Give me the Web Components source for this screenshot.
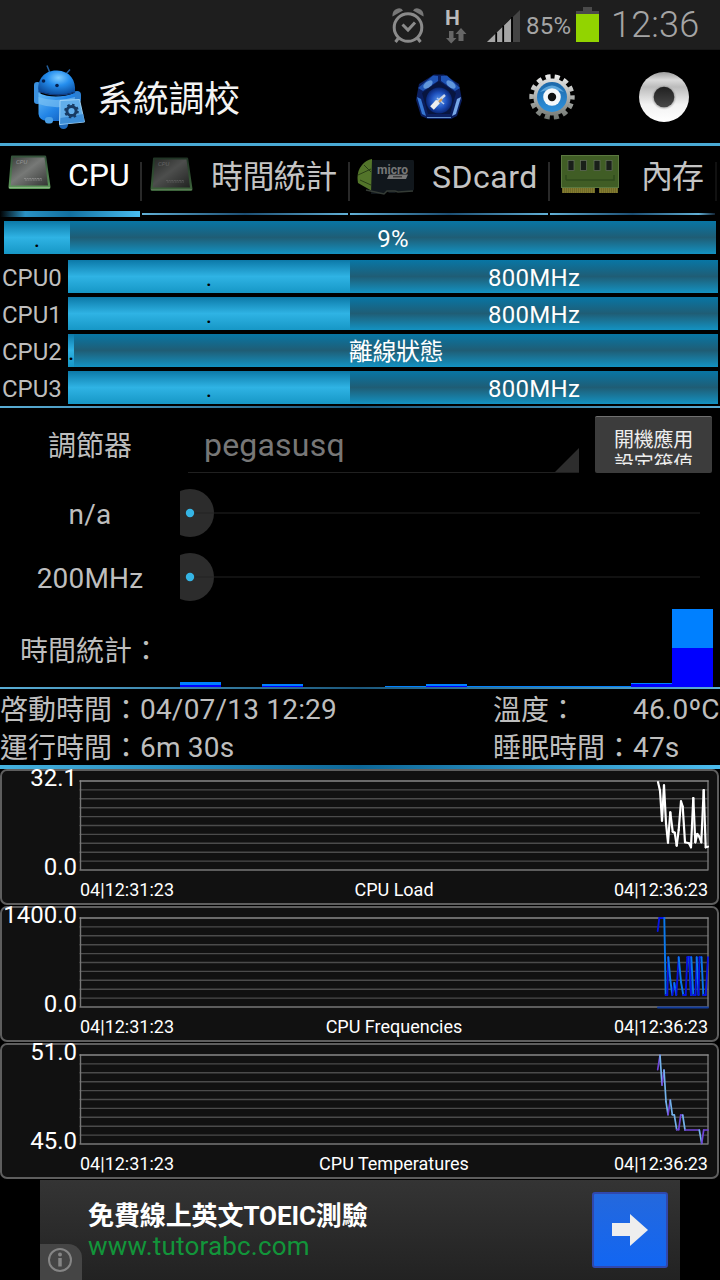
<!DOCTYPE html>
<html lang="zh-Hant">
<head>
<meta charset="utf-8">
<title>系統調校</title>
<style>
  body {
    margin: 0;
    width: 720px;
    height: 1280px;
    overflow: hidden;
    background: #000;
    color: #bebebe;
    font-family: Roboto, "Noto Sans CJK TC", sans-serif;
    font-size: 28px;
  }
</style>
</head>
<body>
<system-tuner></system-tuner>

<script>
// shared base: clones the given markup into an open shadow root
class BaseElement extends HTMLElement {
  render(html) {
    const template = document.createElement("template");
    template.innerHTML = html;
    if (!this.shadowRoot) this.attachShadow({ mode: "open" });
    this.shadowRoot.replaceChildren(template.content.cloneNode(true));
  }
}

const chip = `
  <defs>
    <linearGradient id="g" x1="0" y1="0" x2="1" y2="1">
      <stop offset="0" stop-color="#3c3f3c"/><stop offset=".45" stop-color="#777977"/><stop offset="1" stop-color="#343634"/>
    </linearGradient>
    <linearGradient id="e" x1="0" y1="0" x2="0" y2="1">
      <stop offset="0" stop-color="#33503a"/><stop offset="1" stop-color="#5f9b5c"/>
    </linearGradient>
  </defs>
  <path d="M3 1.5Q3 .5 4 .5H37Q38 .5 38.2 1.5L42.5 32Q42.5 34 41 34H2Q.5 34 .5 32Z" fill="url(#e)"/>
  <path d="M5 2.5H36.5L40 30.5H2.8Z" fill="url(#g)"/>
  <path d="M1 32.5H42" stroke="#8ab582" stroke-width="1"/>
  <text x="8" y="9" font-size="6" font-style="italic" fill="#999">CPU</text>
  <path d="M16 23.5H34M17 25H34" stroke="#999" stroke-width=".7" stroke-dasharray="2 .6"/>`;

const icons = {
  alarm: [32, 35, `
    <g fill="none" stroke="#8b8b8b">
      <circle cx="16" cy="19.5" r="13.8" stroke-width="3"/>
      <path d="M10.5 16.5L16 22L23 14.5" stroke-width="3"/>
      <path d="M6.5 30L3.5 34M25.5 30L28.5 34" stroke-width="3"/>
    </g>
    <path d="M.5 8.5Q0 2.5 5 .7Q9 -.5 11 2.5Z" fill="#777"/>
    <path d="M31.5 8.5Q32 2.5 27 .7Q23 -.5 21 2.5Z" fill="#777"/>`],
  transfer: [21, 16, `
    <path d="M3 3H7.5V10H10.5L5.2 15.5L0 10H3Z" fill="#666"/>
    <path d="M12.5 13H17.5V6H20.5L15 0L9.5 6H12.5Z" fill="#666"/>`],
  signal: [33, 33, `
    <path d="M0 33L33 1V33Z" fill="#444"/>
    <path d="M0 33L24.5 9.2V33Z" fill="#a5a5a5"/>
    <path d="M9.2 23.5V33M16.2 16.5V33M25 8V33" stroke="#000" stroke-width="1.8"/>`],
  battery: [23, 36, `
    <path d="M7 0H16V4H23V8H0V4H7Z" fill="#4a4a4a"/>
    <rect y="7" width="23" height="28" fill="#92d400"/>`],
  app: [54, 66, `
    <defs>
      <linearGradient id="a" x1="0" y1="0" x2="1" y2="1">
        <stop offset="0" stop-color="#65bdfa"/><stop offset=".5" stop-color="#2284e6"/><stop offset="1" stop-color="#0d50ae"/>
      </linearGradient>
      <radialGradient id="h" cx=".55" cy=".3" r=".7">
        <stop offset="0" stop-color="#7fcdff"/><stop offset=".45" stop-color="#258eee"/><stop offset="1" stop-color="#0c4e9f"/>
      </radialGradient>
    </defs>
    <path d="M17 9L14 1.5M33 10L37 5.5" stroke="#235f9c" stroke-width="1.5"/>
    <rect x="1" y="18" width="6.5" height="22" rx="3.2" fill="#3b91df"/>
    <rect x="40" y="27" width="8" height="12" rx="4" fill="#2c7fd2"/>
    <path d="M5.5 29Q22 36 42 29L40 53Q37 58 30 57H14Q6 56 5.5 50Z" fill="url(#a)"/>
    <path d="M5.5 33Q22 39 42 33L41 41Q22 46 5.5 40Z" fill="#7cc2f2" opacity=".65"/>
    <path d="M5.5 27C4 15 12 6 24 6.5C37 7 43 16 42 28Q24 34 5.5 27Z" fill="url(#h)"/>
    <path d="M5.5 27.5Q24 34 42 28.5" stroke="#123f85" stroke-width="1.3" fill="none"/>
    <circle cx="10.5" cy="17" r="1.8" fill="#06214e"/><circle cx="24" cy="21.5" r="1.8" fill="#06214e"/>
    <rect x="12" y="53" width="8" height="6.5" rx="3" fill="#4ba0e6"/>
    <rect x="26" y="54" width="9" height="11" rx="4.5" fill="#1d69bb"/>
    <path d="M27 36.5L46.5 35.5L51.5 58L26.5 60.5Z" fill="#62aeea" stroke="#a5d7f9" stroke-width=".9"/>
    <path d="M27.5 54L50.5 50L51.5 58L27 60Z" fill="#2478ca" opacity=".6"/>
    <circle cx="38.5" cy="47" r="4.6" fill="none" stroke="#173a62" stroke-width="3"/>
    <circle cx="38.5" cy="47" r="6.4" fill="none" stroke="#173a62" stroke-width="1.8" stroke-dasharray="2.5 2.5"/>`],
  pentagon: [48, 48, `
    <defs><radialGradient id="p"><stop offset="0" stop-color="#5d9cf0"/><stop offset=".6" stop-color="#1d50bd"/><stop offset="1" stop-color="#0a2674"/></radialGradient></defs>
    <path d="M19 1.5H29L44 11L47 27L42 43L36 46H13L6 43L1 27L4 11Z" fill="#0b1f60"/>
    <path d="M3 15L18 2.5L23 3V8L8 18Z" fill="#1f53b4"/><path d="M26 3L32 2.5L45 15L40 18L26 8Z" fill="#1f53b4"/>
    <path d="M2 24L6 26L11 43L7 41Z" fill="#3677d4"/><path d="M46 24L42 26L37 43L41 41Z" fill="#77a7e8"/>
    <ellipse cx="13" cy="11.5" rx="5.5" ry="3" transform="rotate(-40 13 11.5)" fill="#78ade9" opacity=".75"/>
    <ellipse cx="36" cy="11.5" rx="5.5" ry="3" transform="rotate(40 36 11.5)" fill="#78ade9" opacity=".75"/>
    <path d="M24 8L41 20L35 41H13L7 20Z" fill="#08153f"/>
    <circle cx="24" cy="27.5" r="13" fill="url(#p)"/>
    <path d="M12 44.5H36" stroke="#5e8dcc"/>
    <path d="M20 31L30 22" stroke="#ccd8ea" stroke-width="2.5"/>
    <path d="M17 35L23 28.5" stroke="#eee" stroke-width="5"/>
    <path d="M22 25L29 31" stroke="#b8ccec" stroke-width="1.5"/><path d="M24 29L27 26" stroke="#d49b57" stroke-width="2"/>`],
  gear: [46, 46, `
    <defs>
      <linearGradient id="m" gradientUnits="userSpaceOnUse" x1="0" y1="0" x2="0" y2="46"><stop offset="0" stop-color="#eee"/><stop offset="1" stop-color="#6e736e"/></linearGradient>
      <linearGradient id="b" x1="0" y1="0" x2="0" y2="1"><stop offset="0" stop-color="#1d68a9"/><stop offset="1" stop-color="#2e91dc"/></linearGradient>
    </defs>
    <circle cx="23" cy="23" r="20.4" fill="none" stroke="url(#m)" stroke-width="4.6" stroke-dasharray="5 4.156" stroke-dashoffset="2.5"/>
    <circle cx="23" cy="23" r="18.6" fill="url(#m)"/>
    <circle cx="23" cy="23" r="15" fill="url(#b)"/>
    <path d="M11 18Q23 5 35 18Q23 13 11 18Z" fill="#78bdec" opacity=".7"/>
    <circle cx="23" cy="23" r="8.8" fill="#f5f8fa"/>
    <circle cx="23" cy="23" r="4.2" fill="#111"/>`],
  record: [50, 50, `
    <defs>
      <linearGradient id="r" x1="0" y1="0" x2="0" y2="1"><stop offset="0" stop-color="#9c9c9c"/><stop offset=".16" stop-color="#dadada"/><stop offset=".3" stop-color="#bcbcbc"/><stop offset=".65" stop-color="#f2f2f2"/><stop offset="1" stop-color="#fff"/></linearGradient>
      <linearGradient id="d" x1="0" y1="0" x2="0" y2="1"><stop offset="0" stop-color="#202020"/><stop offset="1" stop-color="#484848"/></linearGradient>
      <radialGradient id="s"><stop offset=".7" stop-color="#777"/><stop offset="1" stop-color="#ccc" stop-opacity="0"/></radialGradient>
    </defs>
    <circle cx="25" cy="25" r="25" fill="url(#r)"/>
    <circle cx="25" cy="25" r="13" fill="url(#s)"/>
    <circle cx="25" cy="25" r="10.3" fill="url(#d)"/>`],
  chip: [43, 35, chip],
  chipDim: [43, 35, `<g opacity=".65">${chip}</g>`],
  sdcard: [59, 37, `
    <path d="M15 1V33L1 25Q-1 14 5 7Q9 2 15 1Z" fill="#53752a"/>
    <path d="M3 22L14 27M7 7L14 14M1 17L14 11" stroke="#293f16" stroke-width="1"/>
    <path d="M15 2H56Q57 2 57 4V31Q57 33 54 33H41L38 35H32L30 33L27 36H14Z" fill="#11171c"/>
    <path d="M9 32L27 36L30 33H38L41 34L56 33" stroke="#343b35" stroke-width="1.5" fill="none"/>
    <text x="20" y="16" font-size="12" font-weight="700" textLength="31" fill="#777">micro</text>
    <path d="M32 16.5H51L49 21H30Z" fill="#777"/><path d="M36 18.8H45" stroke="#222" stroke-width="1"/>`],
  memory: [58, 40, `
    <rect x=".5" y=".5" width="57" height="32" fill="#405d25" stroke="#5c7940"/>
    <path d="M1 33H34V38H1ZM38 33H57V38H38Z" fill="#837b30"/>
    <path d="M1 35.5H34M38 35.5H57" stroke="#5e5a20" stroke-width="5" stroke-dasharray=".5 1.5"/>
    <path d="M5 25H53V20M5 25V20" fill="none" stroke="#2f4b1c" stroke-width="1.5"/>
    <g fill="#191f19" stroke="#64705c" stroke-width=".7">
      <rect x="7" y="5.5" width="6" height="10"/><rect x="19.5" y="5.5" width="6" height="10"/>
      <rect x="33" y="5.5" width="6" height="10"/><rect x="45" y="5.5" width="6" height="10"/>
    </g>`],
  arrow: [36, 32, `<path d="M0 9H18V0L36 16L18 32V22H0Z" fill="#eee"/>`],
  info: [26, 26, `
    <circle cx="13" cy="13" r="11" fill="none" stroke="#858585" stroke-width="2"/>
    <circle cx="13" cy="7.5" r="2" fill="#858585"/><path d="M13 11V19.5" stroke="#858585" stroke-width="3.5"/>`]
};

class TunerIcon extends BaseElement {
  connectedCallback() {
    const [w, h, body] = icons[this.getAttribute("name")];
    this.render(`
      <style>
        :host { display: block; flex: none; }
        svg { display: block; font-family: Roboto, sans-serif; }
      </style>
      <svg width="${w}" height="${h}" viewBox="0 0 ${w} ${h}">${body}</svg>`);
  }
}
customElements.define("tuner-icon", TunerIcon);

class StatusBar extends BaseElement {
  connectedCallback() {
    this.render(`
      <style>
        :host { display: flex; height: 50px; box-sizing: border-box; padding: 0 20px 0 392px; background: #1e1e1e; color: #a5a5a5; align-items: flex-start; border-bottom: 1px solid #171717; }
        .alarm { margin-top: 8px; }
        .net { margin: 8px 0 0 20px; width: 24px; font: bold 21px/20px Roboto, sans-serif; color: #bbb; padding-left: 1px; }
        .net tuner-icon { margin: 0 0 0 1px; }
        .signal { margin: 9px 0 0 18px; }
        .pct { margin: 12px 0 0 6px; width: 50px; font-size: 24px; line-height: 28px; white-space: nowrap; letter-spacing: .2px; }
        .battery { margin-top: 7px; }
        .clock { margin: 4px 0 0 12px; font-size: 36px; line-height: 42px; font-weight: 300; white-space: nowrap; letter-spacing: .2px; }
      </style>
      <tuner-icon class="alarm" name="alarm"></tuner-icon>
      <div class="net">H<tuner-icon name="transfer"></tuner-icon></div>
      <tuner-icon class="signal" name="signal"></tuner-icon>
      <span class="pct">85%</span>
      <tuner-icon class="battery" name="battery"></tuner-icon>
      <span class="clock">12:36</span>`);
  }
}
customElements.define("status-bar", StatusBar);

class ActionBar extends BaseElement {
  connectedCallback() {
    this.render(`
      <style>
        :host { display: flex; height: 96px; box-sizing: border-box; padding: 0 31px 0 33px; align-items: center; border-bottom: 3px solid #49a9d5; }
        h1 { margin: 0 auto 0 10px; padding-top: 6px; font-size: 36px; line-height: 44px; font-weight: 400; color: #f3f3f3; letter-spacing: -.3px; }
        .actions { display: flex; align-items: center; gap: 66px; }
        .actions tuner-icon:last-child { margin-left: -2px; }
      </style>
      <tuner-icon name="app"></tuner-icon>
      <h1><slot></slot></h1>
      <div class="actions">
        <tuner-icon name="pentagon"></tuner-icon>
        <tuner-icon name="gear"></tuner-icon>
        <tuner-icon name="record"></tuner-icon>
      </div>`);
  }
}
customElements.define("action-bar", ActionBar);

class TabItem extends BaseElement {
  connectedCallback() {
    this.render(`
      <style>
        :host { display: grid; grid-template-rows: 1fr 6px; height: 71px; box-sizing: border-box; color: #c4c4c4; font-size: 32px; }
        .body { display: flex; align-items: flex-start; position: relative; }
        .body::after { content: ""; position: absolute; right: -2px; top: 16px; width: 2px; height: 39px; background: #292929; }
        tuner-icon { margin: var(--icon-margin); }
        .label { margin-top: 12px; line-height: 38px; white-space: nowrap; letter-spacing: var(--spacing, 0); }
        .line { height: 2px; margin-top: 2px; background: linear-gradient(90deg, #62b0d6, #1c4f74 50%, #62b0d6); }
        :host([selected]) { color: #fff; }
        :host([selected]) .label { margin-top: 10px; }
        :host([selected]) .line { height: 6px; margin: 0; background: linear-gradient(90deg, #000, #2a92c4 18%, #12709f 50%, #49bdf0); }
        :host([last]) .line { background: linear-gradient(90deg, #62b0d6, #1c4f74 50%, #62b0d6 90%, #123); }
        :host([last]) .body::after { background: #111; }
      </style>
      <div class="body"><tuner-icon name="${this.getAttribute("icon")}"></tuner-icon><span class="label"><slot></slot></span></div>
      <div class="line"></div>`);
  }
}
customElements.define("tab-item", TabItem);

class TabStrip extends BaseElement {
  connectedCallback() {
    this.render(`
      <style>
        :host { display: grid; grid-template-columns: 140px 206px 198px 165px; column-gap: 2px; height: 71px; }
      </style>
      <slot></slot>`);
  }
}
customElements.define("tab-strip", TabStrip);

// weighted two-part bar: filled share on the left, label in the rest
class LoadBar extends BaseElement {
  connectedCallback() {
    this.render(`
      <style>
        :host { display: flex; height: 33px; flex: 1; font-size: 24px; line-height: 36px; text-align: center; }
        .fill { flex: none; width: ${this.getAttribute("fill")}px; height: 33px; color: #000; background: linear-gradient(#0c79a8, #2fb3e4 50%, #1697c6); }
        .rest { flex: 1; height: 33px; color: #fff; background: linear-gradient(#0876a5, #1f5d75 50%, #1392c2); letter-spacing: var(--spacing, .3px); white-space: nowrap; }
      </style>
      <div class="fill">.</div>
      <div class="rest"><slot></slot></div>`);
  }
}
customElements.define("load-bar", LoadBar);

class CoreRow extends BaseElement {
  connectedCallback() {
    this.render(`
      <style>
        :host { display: flex; padding-right: 2px; }
        .name { width: 66px; padding-left: 2px; font-size: 24px; line-height: 37px; height: 33px; }
      </style>
      <span class="name">${this.getAttribute("name")}</span>
      <load-bar fill="${this.getAttribute("fill")}"><slot></slot></load-bar>`);
  }
}
customElements.define("core-row", CoreRow);

class DividerLine extends BaseElement {
  connectedCallback() {
    this.render(`
      <style>
        :host { display: block; height: 2px; background: linear-gradient(90deg, #5aaed6, #1c587c 50%, #5aaed6); }
        :host([thick]) { height: 4px; background: linear-gradient(90deg, #45b2e0, #0d6797 50%, #4dbdee); }
      </style>`);
  }
}
customElements.define("divider-line", DividerLine);

class GovernorRow extends BaseElement {
  connectedCallback() {
    this.render(`
      <style>
        :host { display: flex; height: 73px; }
        .label { width: 180px; text-align: center; line-height: 78px; height: 73px; }
        .spinner { position: relative; width: 391px; box-sizing: border-box; height: 57px; margin: 8px 16px 0 8px; padding-left: 16px; font-size: 32px; line-height: 59px; color: #777; border-bottom: 1px solid #202020; letter-spacing: .2px; }
        .spinner::after { content: ""; position: absolute; right: 0; bottom: 0; width: 24px; height: 24px; background: #2d2d2d; clip-path: polygon(100% 0, 100% 100%, 0 100%); }
        .button { width: 117px; height: 57px; box-sizing: border-box; margin-top: 8px; padding-top: 11px; border-radius: 2px; border-top: 1px solid #707070; background: #3c3c3c; color: #eee; }
        .button div { height: 37px; overflow: hidden; text-align: center; font-size: 20px; line-height: 24px; letter-spacing: -.2px; }
      </style>
      <span class="label">調節器</span>
      <div class="spinner">pegasusq</div>
      <div class="button"><div>開機應用<br>設定筏值</div></div>`);
  }
}
customElements.define("governor-row", GovernorRow);

class FreqSlider extends BaseElement {
  connectedCallback() {
    this.render(`
      <style>
        :host { display: flex; height: 64px; align-items: center; }
        .label { width: 180px; text-align: center; line-height: 32px; padding-top: 4px; letter-spacing: .2px; }
        svg { display: block; }
      </style>
      <span class="label"><slot></slot></span>
      <svg width="540" height="64">
        <circle cx="10" cy="32" r="24" fill="#2c2c2c"/>
        <path d="M10 32H520" stroke="#222" stroke-opacity=".5" stroke-width="2"/>
        <circle cx="10" cy="32" r="4.2" fill="#35b5e5"/>
      </svg>`);
  }
}
customElements.define("freq-slider", FreqSlider);

class TimeBars extends BaseElement {
  connectedCallback() {
    // [light, dark] heights in px for each frequency step
    const bars = [[3, 2], [0, 0], [2, 1], [0, 0], [0, 0], [1, 0], [2, 1], [1, 0], [1, 0], [1, 0], [1, 0], [1, 3], [39, 39]];
    this.render(`
      <style>
        :host { display: flex; height: 78px; }
        .label { width: 180px; line-height: 86px; padding-left: 20px; box-sizing: border-box; white-space: nowrap; }
        .bars { display: grid; grid-template-columns: repeat(13, 41px); align-items: end; height: 78px; }
        .light { background: #0080ff; }
        .dark { background: #00f; }
      </style>
      <span class="label">時間統計：</span>
      <div class="bars">${bars.map(([l, d]) => `<div><div class="light" style="height:${l}px"></div><div class="dark" style="height:${d}px"></div></div>`).join("")}</div>`);
  }
}
customElements.define("time-bars", TimeBars);

class SystemInfo extends BaseElement {
  connectedCallback() {
    this.render(`
      <style>
        :host { display: grid; grid-template-columns: 140px 353px 140px 87px; grid-auto-rows: 38px; line-height: 44px; white-space: nowrap; }
        span { letter-spacing: .2px; line-height: 42px; }
      </style>
      <div>啓動時間：</div><span>04/07/13 12:29</span><div>溫度：</div><span>46.0ºC</span>
      <div>運行時間：</div><span>6m 30s</span><div>睡眠時間：</div><span>47s</span>`);
  }
}
customElements.define("system-info", SystemInfo);

class HistoryChart extends BaseElement {
  connectedCallback() {
    const attr = (n) => this.getAttribute(n);
    const pts = attr("points").split(" ").map((p) => p.split(",").map(Number));
    let grid = "";
    for (let i = 1; i < 10; i++) {
      grid += `<path d="M0 ${(i * 8.9 + 1).toFixed(1)}H628"/>`;
    }
    // falling segments and rising segments have their own colour
    let line = "";
    for (let i = 1; i < pts.length; i++) {
      const color = pts[i][1] > pts[i - 1][1] ? attr("down") : attr("up");
      line += `<path d="M${pts[i - 1]}L${pts[i]}" stroke="${color}"/>`;
    }
    const base = attr("base") ? `<path d="M578 89.5H628" stroke="${attr("base")}"/>` : "";
    this.render(`
      <style>
        :host { display: grid; grid-template-columns: 75px 630px; column-gap: 3px; width: 719px; height: 136px; box-sizing: border-box; border: 2px solid #5e5e5e; border-radius: 7px; background: #111; color: #fff; }
        .scale { display: flex; flex-direction: column; gap: 65px; margin-top: -5px; align-items: flex-end; font-size: 24px; line-height: 24px; white-space: nowrap; }
        svg { display: block; margin-top: 9px; overflow: visible; }
        .axis { display: flex; justify-content: space-between; font-size: 18px; line-height: 20px; margin: 9px 2px 0 0; }
      </style>
      <div class="scale"><span>${attr("max")}</span><span>${attr("min")}</span></div>
      <div>
        <svg width="630" height="91" fill="none" stroke-linecap="round">
          <g stroke="#4b4b4b" stroke-width="1.4">${grid}</g>
          <path d="M.5 1V90M628 1V90M0 90H628" stroke="#777" stroke-width="1.4"/>
          <path d="M0 1H628" stroke="#888" stroke-width="1.6"/>
          <g stroke-width="${attr("weight")}" transform="translate(0 1)">${base}${line}</g>
        </svg>
        <div class="axis"><span>04|12:31:23</span><span><slot></slot></span><span>04|12:36:23</span></div>
      </div>`);
  }
}
customElements.define("history-chart", HistoryChart);

class AdBanner extends BaseElement {
  connectedCallback() {
    this.render(`
      <style>
        :host { display: flex; position: relative; width: 640px; height: 100px; margin: 1px auto 0; box-sizing: border-box; padding: 12px 12px 0 48px; background: linear-gradient(#343434, #222); }
        .text { flex: 1; padding-top: 9px; font-size: 26px; line-height: 30px; white-space: nowrap; }
        .title { color: #fff; font-weight: 700; letter-spacing: -.1px; }
        .link { color: #12953a; letter-spacing: .2px; }
        .go { width: 76px; height: 76px; box-sizing: border-box; display: grid; place-items: center; border: 2px solid #3048ae; border-radius: 3px; background: linear-gradient(#2468dd, #1266f2); }
        .info { position: absolute; left: 0; bottom: 0; width: 42px; height: 36px; box-sizing: border-box; padding: 3px 7px; background: #454545; border-top-right-radius: 14px; }
      </style>
      <div class="text"><div class="title">免費線上英文TOEIC測驗</div><div class="link">www.tutorabc.com</div></div>
      <div class="go"><tuner-icon name="arrow"></tuner-icon></div>
      <div class="info"><tuner-icon name="info"></tuner-icon></div>`);
  }
}
customElements.define("ad-banner", AdBanner);

class SystemTuner extends BaseElement {
  connectedCallback() {
    this.render(`
      <style>
        :host { display: block; width: 720px; height: 1280px; overflow: hidden; }
        .total { display: flex; margin: 4px 4px 6px; }
        .cores { display: grid; row-gap: 4px; margin-bottom: 2px; }
        .charts { display: grid; row-gap: 1px; }
      </style>
      <status-bar></status-bar>
      <action-bar>系統調校</action-bar>
      <tab-strip>
        <tab-item icon="chip" selected style="--icon-margin: 9px 17px 0 8px">CPU</tab-item>
        <tab-item icon="chipDim" style="--icon-margin: 11px 18px 0 8px; --spacing: -.6px">時間統計</tab-item>
        <tab-item icon="sdcard" style="--icon-margin: 12px 16px 0 7px; --spacing: .5px">SDcard</tab-item>
        <tab-item icon="memory" last style="--icon-margin: 9px 22px 0 11px; --spacing: -1px">內存</tab-item>
      </tab-strip>
      <div class="total"><load-bar fill="66">9%</load-bar></div>
      <div class="cores">
        <core-row name="CPU0" fill="282">800MHz</core-row>
        <core-row name="CPU1" fill="282">800MHz</core-row>
        <core-row name="CPU2" fill="6" style="--spacing: -.4px">離線狀態</core-row>
        <core-row name="CPU3" fill="282">800MHz</core-row>
      </div>
      <divider-line></divider-line>
      <governor-row></governor-row>
      <freq-slider>n/a</freq-slider>
      <freq-slider>200MHz</freq-slider>
      <time-bars></time-bars>
      <divider-line></divider-line>
      <system-info></system-info>
      <divider-line thick></divider-line>
      <div class="charts">
        <history-chart max="32.1" min="0.0" up="#fff" down="#fff" weight="2.2"
          points="578,1 580,9.7 582,39.7 584,4.3 586,42.3 588,61.7 590.3,31.3 592.7,50.7 594.7,51.7 596.7,64.7 598.7,49 601,20.3 602.7,25.7 605,61.3 609,62.3 611,66.3 613.3,17 615.3,61.3 617.3,53 619.3,55.7 621.3,61.3 623.7,9 625.7,66.3 628,65.7">CPU Load</history-chart>
        <history-chart max="1400.0" min="0.0" up="#0713e2" down="#0a78ec" base="#123c9c" weight="1.9"
          points="577.7,13 579.3,0 584.3,0 585.7,77 587.3,77 588.3,39.3 590.3,62 592.3,77 594.3,65 596.3,77 598.7,39.3 601,64 603.3,77 605.7,77 607.3,39.3 609,39.3 611,77 609.5,39.3 611.3,39.3 613.3,77 615.5,77 616.7,39.3 618.5,77 619.5,39.3 621.5,39.3 623.3,77 625.7,77 628,39.3">CPU Frequencies</history-chart>
        <history-chart max="51.0" min="45.0" up="#7044d8" down="#73b2ea" weight="1.7"
          points="577.7,14.7 580,0.3 582,30 584,15 586,46.7 588,59.7 590.3,45 592.3,59.7 594.3,60 596.7,74.7 598.7,74.7 600.7,60 602.7,60 605,75 619.3,75 621.7,88.3 623.7,75 628,75">CPU Temperatures</history-chart>
      </div>
      <ad-banner></ad-banner>`);
  }
}
customElements.define("system-tuner", SystemTuner);
</script>
</body>
</html>
